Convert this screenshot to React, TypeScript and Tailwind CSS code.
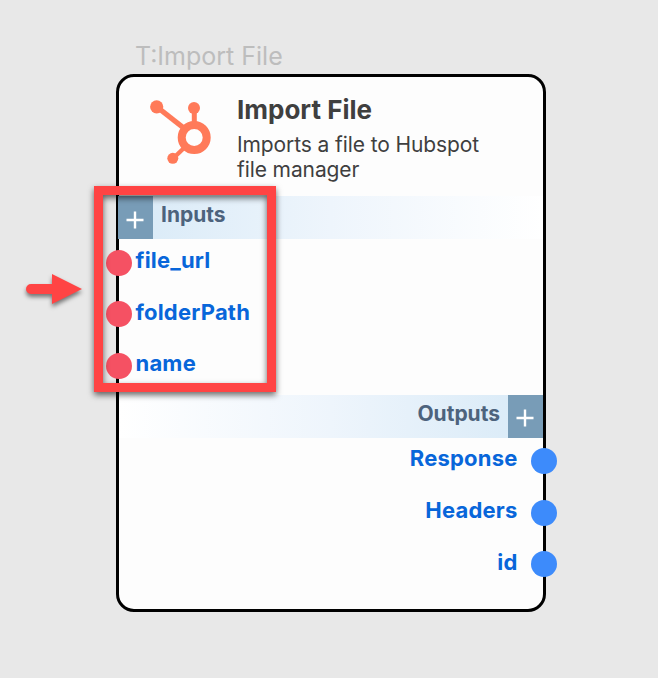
import React from "react";

function PlusTile() {
  return (
    <div className="flex h-[43px] w-[35px] shrink-0 items-center justify-center bg-[#789cb7] pt-[4px] pr-px">
      <svg width="18" height="18" viewBox="0 0 18 18" stroke="#fff" strokeWidth="2.4">
        <path d="M9 0.5V17.5M0.5 9H17.5" />
      </svg>
    </div>
  );
}

function HubspotLogo() {
  return (
    <svg width="62" height="66" viewBox="0 0 62 66" fill="none" stroke="#ff7a59">
      <path d="M7 7L35 29" strokeWidth="5.4" />
      <path d="M44.3 9V24" strokeWidth="5" />
      <path d="M23 58.5L34 48" strokeWidth="4.4" />
      <circle cx="44.2" cy="37.5" r="12.5" strokeWidth="8" />
      <g fill="#ff7a59" stroke="none">
        <circle cx="6.7" cy="6.8" r="6.6" />
        <circle cx="44" cy="8" r="6" />
        <circle cx="22.8" cy="58.3" r="5.5" />
      </g>
    </svg>
  );
}

function InputPort({ label }: { label: string }) {
  return (
    <li className="-ml-[13px] flex h-[51.5px] items-center">
      <span className="size-[26px] shrink-0 rounded-full bg-[#f55163]" />
      <span className="-mt-[5px] ml-[3.5px]">{label}</span>
    </li>
  );
}

function OutputPort({ label }: { label: string }) {
  return (
    <li className="-mr-[13.5px] flex h-[51.8px] items-center justify-end">
      <span className="-mt-[5px] mr-[13px]">{label}</span>
      <span className="size-[26px] shrink-0 rounded-full bg-[#3d8bfb]" />
    </li>
  );
}

export default function App() {
  return (
    <div className="relative h-[678px] w-[658px] overflow-hidden bg-[#e8e8e8] pt-[40px] pl-[116px] font-['Inter',sans-serif]">
      <div className="h-[33.5px] pl-[19px] text-[25px] leading-[32px] whitespace-nowrap text-[#bdbdbd]">T:Import File</div>
      <section className="h-[538.5px] w-[430px] rounded-[18px] border-3 border-black bg-[#fdfdfd]">
        <header className="flex h-[119.5px]">
          <div className="ml-[31px] w-[87px] shrink-0 pt-[23.5px]">
            <HubspotLogo />
          </div>
          <div className="pt-[16.5px] whitespace-nowrap text-[#3f3f3f]">
            <h1 className="text-[26px] leading-[34px] font-bold">Import File</h1>
            <p className="mt-[5px] text-[21px] leading-[25px] tracking-[-0.1px]">
              Imports a file to Hubspot
              <br />
              file manager
            </p>
          </div>
        </header>
        <div className="-ml-px flex h-[43px] bg-linear-to-r from-[#d8eaf7] via-[#eef5fc] to-white">
          <PlusTile />
          <h2 className="pt-[4px] pl-[8px] text-[21px] leading-[30px] font-bold text-[#4d637d]">Inputs</h2>
        </div>
        <ul className="-mt-[2px] h-[157.5px] text-[22px] leading-[28px] font-bold tracking-[0.2px] text-[#0866da]">
          <InputPort label="file_url" />
          <InputPort label="folderPath" />
          <InputPort label="name" />
        </ul>
        <div className="flex h-[43px] justify-end bg-linear-to-r from-white via-[#eef5fc] to-[#d8eaf7]">
          <h2 className="pt-[4px] pr-[8px] text-[21px] leading-[30px] font-bold text-[#4d637d]">Outputs</h2>
          <PlusTile />
        </div>
        <ul className="-mt-[2.5px] text-[22px] leading-[28px] font-bold tracking-[0.2px] text-[#0866da]">
          <OutputPort label="Response" />
          <OutputPort label="Headers" />
          <OutputPort label="id" />
        </ul>
      </section>
      <div className="absolute top-[186px] left-[94px] h-[206px] w-[182px] border-9 border-[#ff4444] [filter:drop-shadow(0_3px_3px_rgba(0,0,0,0.6))]" />
      <svg
        className="absolute top-[270px] left-[22px] [filter:drop-shadow(0_3px_2px_rgba(0,0,0,0.5))]"
        width="64"
        height="40"
        viewBox="0 0 64 40"
        fill="#ff4444"
      >
        <path d="M9 14H30V4L60 19L30 34V24H9A5 5 0 0 1 9 14Z" />
      </svg>
    </div>
  );
}
